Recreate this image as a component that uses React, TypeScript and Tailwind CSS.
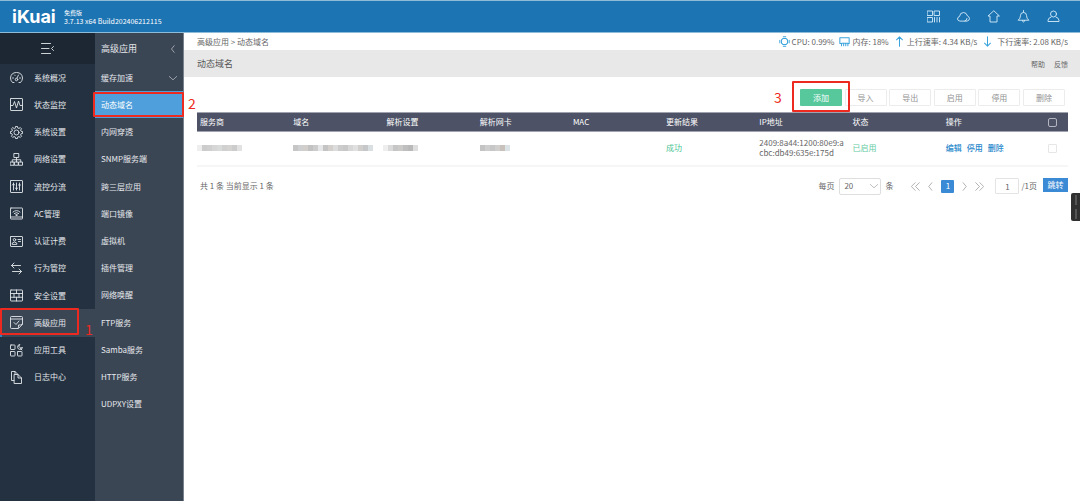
import React from 'react';

const Icon = ({ size = 'size-[13px]', children }: { size?: string, children: React.ReactNode }) => (
  <svg viewBox="0 0 26 26" className={`${size} shrink-0`} fill="none" stroke="currentColor" strokeWidth="1.8" strokeLinecap="round" strokeLinejoin="round" aria-hidden="true">
    {children}
  </svg>
);

const menu = [
  { label: '系统概况', icon: <><path d="M8 23H5Q1 19 1 14 2 3 13 3t12 11q0 5-4 9h-3" /><circle cx="13" cy="17" r="2.500" /><path d="m14 14 3-6M5 14h2M21 14h-2M9 8l1 1" /></> },
  { label: '状态监控', icon: <><rect x="1" y="1" width="24" height="24" rx="1" /><path d="M1 15h5l3-8 4 13 4-14 3 9h5" /></> },
  { label: '系统设置', icon: <><path d="M10.500 4 11 1h4l.5 3 2.500 1 2.500-2 2.600 2.600-2 2.500 1 2.400 3 .5v4l-3 .5-1 2.400 2 2.500-2.600 2.600-2.500-2-2.500 1-.5 3h-4l-.5-3-2.500-1-2.500 2L2.900 20.400l2-2.500-1-2.400-3-.5v-4l3-.5 1-2.400-2-2.500L5.500 3 8 5z" /><circle cx="13" cy="13" r="5" /></> },
  { label: '网络设置', icon: <><rect x="8.500" y="1" width="9" height="8" /><path d="M13 9v9M4.500 18v-4.500h17V18" /><rect x="1" y="18" width="7" height="6.500" /><rect x="9.500" y="18" width="7" height="6.500" /><rect x="18" y="18" width="7" height="6.500" /></> },
  { label: '流控分流', icon: <><rect x="1" y="1" width="24" height="24" rx="1" /><path d="M7 6v14M13 6v14M19 6v14M5 10l2-3 2 3M11 16l2 3 2-3M17 10h4" /></> },
  { label: 'AC管理', icon: <><rect x="1" y="2" width="24" height="22" rx="1" /><path d="M1 20h24M6 10q7-6 14 0M8.500 13q4.500-4 9 0M11 15.500q2-2 4 0" /><circle cx="13" cy="16.500" r=".6" /></> },
  { label: '认证计费', icon: <><rect x="1" y="3" width="24" height="20" rx="1" /><circle cx="9" cy="9.500" r="2.500" /><path d="M4.500 18v-2q4.500-4 9 0v2zM16 9h5M17 13h4" /></> },
  { label: '行为管控', icon: <path d="M8 2 3 7l5 5M3 7h18M18 14l5 5-5 5M23 19H5" /> },
  { label: '安全设置', icon: <><rect x="1" y="2" width="24" height="22" rx="1" /><path d="M1 9h24M1 16.500h24M13 2v7M8 9v7.500M18 9v7.500M13 16.500V24" /></> },
  { label: '高级应用', icon: <><path d="M25 16V3q0-2-2-2H3Q1 1 1 3v20q0 2 2 2h13zM1 6h24M16 25q2-3 1-7 4 1 8-2" /><path d="m8 13 4 4 6-7" /></>, active: true },
  { label: '应用工具', icon: <><rect x="1" y="2" width="9" height="9" rx="1" /><rect x="1" y="15" width="9" height="9" rx="1" /><rect x="15" y="15" width="9" height="9" rx="1" /><path d="M19 1a5 5 0 1 0 6 6l-4 1-3-3zM21 9l3 3" /></> },
  { label: '日志中心', icon: <><path d="M8 19H3V1h7l5 5M10 1v5" /><path d="M9 7h7l7 7v11H9zM16 7v7h7" /></> },
];

const subMenu = ['缓存加速', '动态域名', '内网穿透', 'SNMP服务端', '跨三层应用', '端口镜像', '虚拟机', '插件管理', '网络唤醒', 'FTP服务', 'Samba服务', 'HTTP服务', 'UDPXY设置'];

const columns = ['服务商', '域名', '解析设置', '解析网卡', 'MAC', '更新结果', 'IP地址', '状态', '操作'];

const Masked = ({ blocks }: { blocks: string[] }) => (
  <div className="flex items-center">
    {blocks.map((color, i) => <span key={i} className={`h-[6px] w-[5px] ${color}`} />)}
  </div>
);

const Header = () => (
  <header className="flex h-[33px] items-center justify-between border-y border-[#8dbbd8] bg-[#1d74b3] pl-3 pr-5 text-white">
    <div className="flex items-center gap-2">
      <span className="w-[44px] font-['Inter'] text-[18px] font-bold leading-[20px]">iKuai</span>
      <div className="pt-[1px] text-[7px] leading-[9px] whitespace-nowrap">
        <p className="text-[6px]">免费版</p>
        <p>3.7.13 x64 Build202406212115</p>
      </div>
    </div>
    <div className="flex items-center gap-[17px] text-[#d7edfa]">
      <button aria-label="二维码"><Icon><rect x="1" y="2" width="10" height="9" /><rect x="15" y="2" width="10" height="9" /><rect x="1" y="15" width="10" height="9" /><path d="M15 15v9M20 15v9M25 15v9" /></Icon></button>
      <button aria-label="云服务"><Icon><path d="M5 22q-4-1-4-4 0-4 4-5 1-8 8-8 6 0 8 7 4 2 4 5 0 4-4 5zM16 22q4-1 4-5" /></Icon></button>
      <button aria-label="首页"><Icon><path d="M13 2 2 12h4v12h14V12h4z" /></Icon></button>
      <button aria-label="通知"><Icon><path d="M13 1v3M3 20q4-3 4-9 0-6 6-6t6 6q0 6 4 9zM11 21q0 3 2 3t2-3" /></Icon></button>
      <button aria-label="用户"><Icon><circle cx="13" cy="8" r="6" /><path d="M8 14q-6 2-6 7v2h22v-2q0-5-6-7" /></Icon></button>
    </div>
  </header>
);

const Sidebar = () => (
  <nav className="relative w-[95px] shrink-0 bg-[#233141] text-[#e3e7ea]">
    <button aria-label="收起菜单" className="flex h-[31px] w-full items-center justify-center bg-[#1c2733]">
      <Icon><path d="M1 3h18M1 13h15M1 23h18M25 9l-4 4 4 4" /></Icon>
    </button>
    <ul className="flex h-[327px] flex-col">
      {menu.map((item) => (
        <li key={item.label} className="flex-1">
          <a href="#" className={`flex h-full items-center gap-[11px] ${item.active ? 'border-l-2 border-[#2c7fc0] bg-[#3b4655] pl-2' : 'pl-[10px]'}`}>
            <Icon>{item.icon}</Icon>
            <span>{item.label}</span>
          </a>
        </li>
      ))}
    </ul>
    <div className="absolute left-0 top-[275px] h-[27px] w-[79px] rounded-[1px] border-2 border-[#ee2a20]" />
    <span className="absolute left-[85px] top-[288px] text-[14px] leading-[16px] text-[#ee2a20]">1</span>
  </nav>
);

const SubMenu = () => (
  <nav className="relative w-[89px] shrink-0 border-r border-[#78818c] bg-[#3b4655] text-[#e6e9ec]">
    <div className="flex h-[31px] items-center justify-between pl-[6px] pr-[6px]">
      <span className="text-[9px]">高级应用</span>
      <Icon size="size-[8px]"><path d="m17 2-9 11 9 11" /></Icon>
    </div>
    <ul className="flex h-[354px] flex-col">
      {subMenu.map((label, i) => (
        <li key={label} className="flex-1">
          <a href="#" className={`flex h-full items-center justify-between pl-[6px] pr-[6px] ${label === '动态域名' ? 'bg-[#4f9fdc] text-white' : ''}`}>
            {label}
            {i === 0 && <Icon size="size-[8px]"><path d="m1 8 12 11L25 8" /></Icon>}
          </a>
        </li>
      ))}
    </ul>
    <div className="absolute -left-[2px] top-[59px] h-[25px] w-[91px] rounded-[1px] border-2 border-[#ee2a20]" />
    <span className="absolute left-[93px] top-[62px] text-[14px] leading-[16px] text-[#ee2a20]">2</span>
  </nav>
);

const StatusBar = () => (
  <div className="flex h-[17px] items-center justify-between pl-[13px] pr-3">
    <p>高级应用 &gt; 动态域名</p>
    <div className="flex items-center gap-[5px] whitespace-nowrap">
      <span className="flex items-center gap-[2px]">
        <span className="text-[#3ba3dc]"><Icon size="size-[11px]"><path strokeWidth="2.400" d="M9 6h8l3 3v8l-3 3H9l-3-3V9zM10 2h6M10 24h6M2 10v6M24 10v6" /></Icon></span>
        CPU: 0.99%
      </span>
      <span className="flex items-center gap-[2px]">
        <span className="text-[#3ba3dc]"><Icon size="size-[11px]"><path strokeWidth="2.400" d="M5 18H2V4h22v14h-3M6 17v6M11 17v6M16 17v6M21 17v6M6 17h15" /></Icon></span>
        内存: 18%
      </span>
      <span className="flex items-center gap-[2px]">
        <span className="text-[#3ba3dc]"><Icon size="size-[11px]"><path strokeWidth="2.400" d="M13 24V3M6 9l7-7 7 7" /></Icon></span>
        上行速率: 4.34 KB/s
      </span>
      <span className="flex items-center gap-[4px]">
        <span className="text-[#3ba3dc]"><Icon size="size-[11px]"><path strokeWidth="2.400" d="M13 2v21M6 17l7 7 7-7" /></Icon></span>
        下行速率: 2.08 KB/s
      </span>
    </div>
  </div>
);

const Toolbar = () => (
  <div className="mt-3 flex justify-end pr-[3px]">
    <div className="relative flex w-[265px] justify-between">
      <button className="h-[17px] w-[42px] rounded-[1px] bg-[#57c89c] text-white">添加</button>
      {['导入', '导出', '启用', '停用', '删除'].map((label) => (
        <button key={label} className="h-[17px] w-[42px] rounded-[1px] border border-[#ececec] text-[#929292]">{label}</button>
      ))}
      <div className="absolute -left-2 -top-2 h-[31px] w-[58px] rounded-[1px] border-2 border-[#ee2a20]" />
      <span className="absolute -left-[26px] top-0 text-[14px] leading-[16px] text-[#ee2a20]">3</span>
    </div>
  </div>
);

const DomainTable = () => (
  <table className="mt-[6px] w-full table-fixed text-left">
    <thead className="bg-[#4d5266] text-white">
      <tr className="h-[19px] border-y border-[#a0a3ae]">
        {columns.map((name) => <th key={name} className="px-[3px] font-normal">{name}</th>)}
        <th className="w-[32px]">
          <input type="checkbox" aria-label="全选" className="mx-auto block size-[9px] appearance-none rounded-[2px] border border-[#b3b6c0]" />
        </th>
      </tr>
    </thead>
    <tbody>
      <tr className="h-[34px] border-b-2 border-[#f6f6f6]">
        <td><Masked blocks={['bg-[#eeeeee]', 'bg-[#cccccc]', 'bg-[#cfcfcf]', 'bg-[#d6d6d6]', 'bg-[#d9dada]', 'bg-[#cfd0cf]', 'bg-[#d4d3d2]', 'bg-[#cccccc]', 'bg-[#e2e2e2]']} /></td>
        <td className="pl-[3px]"><Masked blocks={['bg-[#c6c6c6]', 'bg-[#cecfd0]', 'bg-[#d2cecc]', 'bg-[#c2c2c2]', 'bg-[#cccccc]', 'bg-[#e5e7e8]', 'bg-[#c4c4c4]', 'bg-[#d3cfcd]', 'bg-[#dcdcdc]', 'bg-[#cccccc]', 'bg-[#c8c8c8]', 'bg-[#d7d7d7]', 'bg-[#e0e0e0]', 'bg-[#d1cfce]', 'bg-[#c6c7c8]', 'bg-[#dadfe1]']} /></td>
        <td><Masked blocks={['bg-[#eeeeee]', 'bg-[#dadada]', 'bg-[#c6c6c6]', 'bg-[#cccac9]', 'bg-[#bfbfbf]', 'bg-[#b9b9b9]', 'bg-[#dedede]']} /></td>
        <td className="pl-[3px]"><Masked blocks={['bg-[#c4c4c4]', 'bg-[#cecece]', 'bg-[#c7c7c7]', 'bg-[#d0cfce]', 'bg-[#c9c1bc]', 'bg-[#dce3e6]']} /></td>
        <td />
        <td className="px-[3px] text-[#4cc596]">成功</td>
        <td className="break-all px-[3px] leading-[10px]">2409:8a44:1200:80e9:acbc:db49:635e:175d</td>
        <td className="px-[3px] text-[#63cba3]">已启用</td>
        <td className="px-[3px] text-[#2787cc]">
          <div className="flex gap-[5px] font-medium">
            <a href="#">编辑</a><a href="#">停用</a><a href="#">删除</a>
          </div>
        </td>
        <td>
          <input type="checkbox" aria-label="选择此行" className="mx-auto block size-[9px] appearance-none rounded-[1px] border border-[#e6e6e6]" />
        </td>
      </tr>
    </tbody>
  </table>
);

const Pagination = () => (
  <div className="mt-[11px] flex items-center justify-between pl-[3px]">
    <p>共 1 条 当前显示 1 条</p>
    <div className="flex items-center">
      <label htmlFor="pageSize">每页</label>
      <div className="relative ml-[5px] mr-1 flex items-center">
        <select id="pageSize" className="h-[17px] w-[42px] appearance-none rounded-[2px] border border-[#dedede] bg-white pl-1">
          <option>20</option>
        </select>
        <span className="pointer-events-none absolute right-[3px] text-[#888888]"><Icon size="size-[8px]"><path d="m1 8 12 11L25 8" /></Icon></span>
      </div>
      <span>条</span>
      <div className="ml-[18px] mr-[11px] flex items-center gap-[6px] text-[#858585]">
        <button aria-label="首页"><Icon size="size-[9px]"><path d="M12 2 1 13l11 11M24 2 13 13l11 11" /></Icon></button>
        <button aria-label="上一页"><Icon size="size-[9px]"><path d="M17 2 8 13l9 11" /></Icon></button>
        <button className="size-[13px] rounded-[1px] bg-[#3b8ad6] text-white">1</button>
        <button aria-label="下一页"><Icon size="size-[9px]"><path d="m9 2 9 11-9 11" /></Icon></button>
        <button aria-label="末页"><Icon size="size-[9px]"><path d="m2 2 11 11L2 24M14 2l11 11-11 11" /></Icon></button>
      </div>
      <input aria-label="页码" defaultValue="1" className="h-4 w-6 rounded-[1px] border border-[#e4e4e4] text-center" />
      <span className="ml-[2px] mr-[6px]">/1页</span>
      <button className="mb-[2px] h-[14px] w-[25px] bg-[#3b8ad6] text-white">跳转</button>
    </div>
  </div>
);

export default function App() {
  return (
    <div className="relative flex min-h-screen flex-col bg-white font-['Noto_Sans_CJK_SC',sans-serif] text-[8px] leading-[12px] text-[#666666]">
      <Header />
      <div className="flex flex-1">
        <Sidebar />
        <SubMenu />
        <main className="min-w-0 flex-1">
          <StatusBar />
          <div className="flex h-[27px] items-center justify-between bg-[#e8e8e8] pl-[13px] pr-3">
            <h1 className="text-[9px] text-[#555555]">动态域名</h1>
            <div className="flex gap-[9px] text-[7px]">
              <a href="#">帮助</a>
              <a href="#">反馈</a>
            </div>
          </div>
          <div className="pl-[13px] pr-3">
            <Toolbar />
            <DomainTable />
            <Pagination />
          </div>
        </main>
      </div>
      <button aria-label="侧边工具" className="absolute right-0 top-[193px] flex h-[28px] w-[9px] flex-col items-center justify-center gap-1 rounded-l-[2px] bg-[#303030]">
        <span className="h-[10px] w-[2px] bg-[#555555]" />
        <span className="h-[10px] w-[2px] bg-[#555555]" />
      </button>
    </div>
  );
}
